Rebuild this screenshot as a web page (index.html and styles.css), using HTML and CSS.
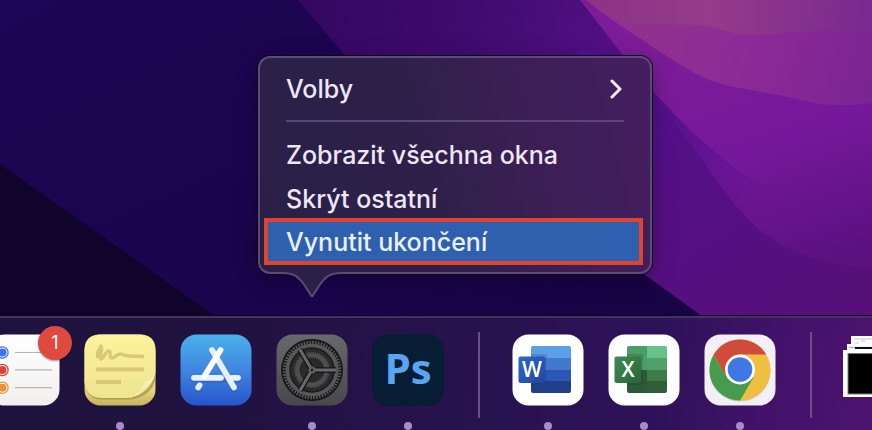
FILE: index.html
```
<!DOCTYPE html>
<html lang="cs">
<head>
<meta charset="UTF-8">
<meta name="viewport" content="width=device-width, initial-scale=1.0">
<title>Dock</title>
<link rel="stylesheet" href="styles.css">
</head>
<body>
<div class="desktop">
    <svg class="wallpaper" viewBox="0 0 872 430" preserveAspectRatio="xMidYMin slice" aria-hidden="true">
        <defs>
            <linearGradient id="navy" x1="0" y1="0" x2="1" y2="1">
                <stop offset="0" stop-color="#1e0555"/>
                <stop offset="0.5" stop-color="#1a044c"/>
                <stop offset="1" stop-color="#16023c"/>
            </linearGradient>
            <linearGradient id="purple" gradientUnits="userSpaceOnUse" x1="310" y1="0" x2="620" y2="60">
                <stop offset="0" stop-color="#340861"/>
                <stop offset="0.5" stop-color="#3f0b6f"/>
                <stop offset="1" stop-color="#541084"/>
            </linearGradient>
            <linearGradient id="purpleLow" gradientUnits="userSpaceOnUse" x1="640" y1="120" x2="780" y2="330">
                <stop offset="0" stop-color="#53108a"/>
                <stop offset="1" stop-color="#570f7a"/>
            </linearGradient>
            <linearGradient id="violet" gradientUnits="userSpaceOnUse" x1="720" y1="30" x2="800" y2="270">
                <stop offset="0" stop-color="#7c1c98"/>
                <stop offset="0.5" stop-color="#75189b"/>
                <stop offset="1" stop-color="#5b117f"/>
            </linearGradient>
            <linearGradient id="fold" gradientUnits="userSpaceOnUse" x1="660" y1="110" x2="770" y2="200">
                <stop offset="0" stop-color="#540f8c"/>
                <stop offset="1" stop-color="#540f8c" stop-opacity="0"/>
            </linearGradient>
            <linearGradient id="rose" gradientUnits="userSpaceOnUse" x1="660" y1="30" x2="872" y2="90">
                <stop offset="0" stop-color="#903190"/>
                <stop offset="0.4" stop-color="#8c2a96"/>
                <stop offset="1" stop-color="#7b2494"/>
            </linearGradient>
            <linearGradient id="pink" gradientUnits="userSpaceOnUse" x1="600" y1="0" x2="872" y2="20">
                <stop offset="0" stop-color="#8e3488"/>
                <stop offset="0.4" stop-color="#953b8a"/>
                <stop offset="1" stop-color="#792990"/>
            </linearGradient>
        </defs>
        <rect width="872" height="430" fill="url(#navy)"/>
        <path d="M0 164L215 316V430H0Z" fill="#10042c"/>
        <path d="M298 0L345 55Q480 190 643 273L702 316V430H872V0Z" fill="url(#purple)"/>
        <path d="M578 50H872V316H702L643 273Z" fill="url(#purpleLow)"/>
        <path d="M580 0L622 54L653 91C682 130 706 166 728 196C755 231 782 250 820 260Q845 266 872 268V0Z" fill="url(#violet)"/>
        <path d="M653 91Q690 134 735 168L790 205L770 238Q748 222 728 196C706 166 682 130 653 91Z" fill="url(#fold)"/>
        <path d="M586 0Q604 14 624 28C680 64 700 82 740 88Q790 97 820 104Q845 107 872 103V0Z" fill="url(#rose)"/>
        <path d="M586 0Q602 13 618 22C650 26 700 23 711 27C735 34 742 36 770 34Q830 28 872 33V0Z" fill="url(#pink)"/>
    </svg>

    <nav class="dock" aria-label="Dock">
        <button class="app" type="button" aria-label="Připomínky">
            <svg viewBox="0 0 72 72">
                <defs>
                    <linearGradient id="paper" x1="0" y1="0" x2="0" y2="1">
                        <stop offset="0" stop-color="#fff"/>
                        <stop offset="1" stop-color="#f2f0ef"/>
                    </linearGradient>
                </defs>
                <rect x="0.5" y="0.5" width="71" height="71" rx="16" fill="url(#paper)"/>
                <path d="M27 18.5H64M27 35.8H64M27 53.7H64" stroke="#b5b4b6" stroke-width="1.2"/>
                <g fill="#fff" stroke-width="1.3">
                    <circle cx="14.5" cy="18.5" r="5.6" stroke="#3a76e8"/>
                    <circle cx="14.5" cy="36" r="5.6" stroke="#d9453a"/>
                    <circle cx="14.5" cy="53.7" r="5.6" stroke="#e8953a"/>
                </g>
                <circle cx="14.5" cy="18.5" r="4" fill="#3a76e8"/>
                <circle cx="14.5" cy="36" r="4" fill="#d9453a"/>
                <circle cx="14.5" cy="53.7" r="4" fill="#e8953a"/>
            </svg>
            <span class="badge">1</span>
        </button>

        <button class="app running" type="button" aria-label="Lístečky">
            <svg viewBox="0 0 72 72">
                <defs>
                    <linearGradient id="noteBack" x1="0" y1="0" x2="0" y2="1">
                        <stop offset="0.8" stop-color="#e2d37c"/>
                        <stop offset="1" stop-color="#c6b35c"/>
                    </linearGradient>
                    <linearGradient id="noteFront" x1="0" y1="0" x2="0" y2="1">
                        <stop offset="0" stop-color="#fdf29c"/>
                        <stop offset="1" stop-color="#efe590"/>
                    </linearGradient>
                    <linearGradient id="noteCurl" gradientUnits="userSpaceOnUse" x1="54" y1="48" x2="63" y2="58">
                        <stop offset="0" stop-color="#f4ea98"/>
                        <stop offset="0.6" stop-color="#fbf3b4"/>
                        <stop offset="1" stop-color="#d8c978"/>
                    </linearGradient>
                </defs>
                <rect x="0.5" y="0.5" width="71" height="71" rx="16" fill="url(#noteBack)"/>
                <path d="M0.5 48Q2 65.5 18 65.5H46C60 64 69 57 71.5 44V38L50 50L0.5 46Z" fill="#a39244" opacity="0.75"/>
                <path d="M0.5 16.5Q0.5 0.5 16.5 0.5H55.5Q71.5 0.5 71.5 16.5V38C69 50 61 62 43 64H18Q2 64 0.5 48Z" fill="url(#noteFront)"/>
                <path d="M71.5 38C70 43 66 46 61 47C59 56 53 62 43 64C58 62 68 54 71.5 38Z" fill="url(#noteCurl)"/>
                <g fill="none" stroke="#d9c877" stroke-width="4">
                    <path d="M12 35.5H60M12 48H37"/>
                    <path d="M14 24C12 19 15 16 17 12C20 13 14 25 17 25C20 25 22 16 25 17C28 18 24 24 28 24C31 24 33 19 37 20C41 22 43 22 60 22.5" stroke-width="3.4"/>
                </g>
            </svg>
        </button>

        <button class="app" type="button" aria-label="App Store">
            <svg viewBox="0 0 72 72">
                <defs>
                    <linearGradient id="store" x1="0" y1="0" x2="0" y2="1">
                        <stop offset="0" stop-color="#4bb0ec"/>
                        <stop offset="0.5" stop-color="#3f86df"/>
                        <stop offset="1" stop-color="#2854cd"/>
                    </linearGradient>
                </defs>
                <rect x="0.5" y="0.5" width="71" height="71" rx="16" fill="url(#store)"/>
                <g fill="none" stroke-linecap="round" stroke-width="5.8">
                    <path d="M32 17.5L54 55M39 17.5L23.5 43.5M18.5 54.5L20 52M14 45.5H58" stroke="#1b4fae" opacity="0.35"/>
                    <path d="M32 16L54 53.5M18.2 53.5L19.6 51.2" stroke="#e4effb"/>
                    <path d="M14 43.8H41M52 43.8H58" stroke="#e9f2fc"/>
                    <path d="M40.5 16L24.5 42" stroke="#fff"/>
                </g>
            </svg>
        </button>

        <div class="app-slot">
            <button class="app running" type="button" aria-label="Předvolby systému" aria-haspopup="menu" aria-expanded="true">
                <svg viewBox="0 0 72 72">
                    <defs>
                        <linearGradient id="steel" x1="0" y1="0" x2="0" y2="1">
                            <stop offset="0" stop-color="#69696c"/>
                            <stop offset="1" stop-color="#48474a"/>
                        </linearGradient>
                    </defs>
                    <rect x="0.5" y="0.5" width="71" height="71" rx="16" fill="url(#steel)"/>
                    <circle cx="36" cy="36" r="31" fill="#171718"/>
                    <g fill="none">
                        <circle cx="36" cy="36" r="27.5" stroke="#5c5c5e" stroke-width="3.5" stroke-dasharray="1.5 1.38"/>
                        <circle cx="36" cy="36" r="24.5" stroke="#58585a" stroke-width="3.6"/>
                        <circle cx="36" cy="36" r="21.5" fill="#29292a"/>
                        <circle cx="36" cy="36" r="17" stroke="#5a5a5a" stroke-width="2" stroke-dasharray="1.1 1.125"/>
                        <circle cx="36" cy="36" r="14.5" stroke="#4e4e50" stroke-width="4"/>
                        <path d="M36 36H60M36 36L24 15.5M36 36L24 56.5" stroke="#151516" stroke-width="5.5"/>
                        <path d="M36 36H60M36 36L24 15.5M36 36L24 56.5" stroke="#69696b" stroke-width="3"/>
                    </g>
                    <circle cx="36" cy="36" r="3.5" fill="#5e5e60"/>
                    <circle cx="36" cy="36" r="1.2" fill="#171718"/>
                </svg>
            </button>

            <div class="menu" role="menu">
                <button class="menu-item" type="button" role="menuitem">
                    Volby
                    <svg class="chevron" viewBox="0 0 12 20" aria-hidden="true"><path d="M2 2L10 10L2 18"/></svg>
                </button>
                <hr class="menu-line">
                <button class="menu-item" type="button" role="menuitem">Zobrazit všechna okna</button>
                <button class="menu-item" type="button" role="menuitem">Skrýt ostatní</button>
                <button class="menu-item selected" type="button" role="menuitem">Vynutit ukončení</button>
                <svg class="menu-tail" viewBox="0 0 60 28" aria-hidden="true">
                    <path d="M0 0V1C13 1 16 5 21 11L28.5 22.5Q30 26 31.5 22.5L39 11C44 5 47 1 60 1V0Z" fill="#2b2047"/>
                    <path d="M0 1C13 1 16 5 21 11L28.500 22.500Q30 26 31.500 22.500L39 11C44 5 47 1 60 1" fill="none" stroke="#5b4c73" stroke-width="2"/>
                </svg>
            </div>
        </div>

        <button class="app running" type="button" aria-label="Photoshop">
            <span class="tile-ps">Ps</span>
        </button>

        <span class="divider"></span>

        <button class="app running" type="button" aria-label="Word">
            <svg viewBox="0 0 72 72">
                <defs>
                    <linearGradient id="wordTile" x1="0" y1="0" x2="1" y2="1">
                        <stop offset="0" stop-color="#2d67c9"/>
                        <stop offset="1" stop-color="#2147a0"/>
                    </linearGradient>
                    <clipPath id="sheet"><rect x="19" y="12" width="40" height="47" rx="2"/></clipPath>
                </defs>
                <rect x="0.5" y="0.5" width="71" height="71" rx="16" fill="#fff"/>
                <g clip-path="url(#sheet)">
                    <rect x="19" y="12" width="40" height="12" fill="#5b9fe8"/>
                    <rect x="19" y="24" width="40" height="12" fill="#4379cd"/>
                    <rect x="19" y="36" width="40" height="11" fill="#2b58b6"/>
                    <rect x="19" y="47" width="40" height="12" fill="#214088"/>
                    <path d="M19 20H35V51H19Z" fill="#14327a" opacity="0.2"/>
                </g>
                <rect x="6.5" y="22.5" width="26.5" height="26.5" rx="2" fill="url(#wordTile)"/>
                <text class="letter" x="20" y="43">W</text>
            </svg>
        </button>

        <button class="app running" type="button" aria-label="Excel">
            <svg viewBox="0 0 72 72">
                <defs>
                    <linearGradient id="excelTile" x1="0" y1="0" x2="1" y2="1">
                        <stop offset="0" stop-color="#3f8c50"/>
                        <stop offset="1" stop-color="#28653a"/>
                    </linearGradient>
                </defs>
                <rect x="0.5" y="0.5" width="71" height="71" rx="16" fill="#fff"/>
                <g clip-path="url(#sheet)">
                    <rect x="19" y="12" width="20" height="24" fill="#4c9e68"/>
                    <rect x="39" y="12" width="20" height="12" fill="#66c18a"/>
                    <rect x="39" y="24" width="20" height="12" fill="#4fa06b"/>
                    <rect x="19" y="36" width="20" height="23" fill="#2c5a38"/>
                    <rect x="39" y="36" width="20" height="11" fill="#3b7c48"/>
                    <rect x="39" y="47" width="20" height="12" fill="#2e5f39"/>
                    <path d="M19 20H35V51H19Z" fill="#103b20" opacity="0.2"/>
                </g>
                <rect x="6.5" y="22.5" width="26.5" height="26.5" rx="2" fill="url(#excelTile)"/>
                <text class="letter" x="20" y="43">X</text>
            </svg>
        </button>

        <button class="app running" type="button" aria-label="Chrome">
            <svg viewBox="0 0 72 72">
                <rect x="0.5" y="0.5" width="71" height="71" rx="16" fill="#f3eff6"/>
                <circle cx="36" cy="37" r="30.5" fill="#a79d9d" opacity="0.5"/>
                <circle cx="36" cy="36" r="30.5" fill="#f0bf42"/>
                <path d="M36 20.5H62.3A30.5 30.5 0 0 0 9.6 20.7L22.6 43.7Z" fill="#d04b3a"/>
                <path d="M9.6 20.7A30.5 30.5 0 0 0 36 66.5L49.4 43.7H36L22.6 43.7Z" fill="#469b4e"/>
                <circle cx="36" cy="35.5" r="15" fill="#fff"/>
                <circle cx="36" cy="35.5" r="12.3" fill="#3f78e4"/>
            </svg>
        </button>

        <span class="divider"></span>

        <button class="app" type="button" aria-label="Stažené">
            <svg viewBox="0 0 72 72">
                <rect x="7" y="2" width="60" height="40" fill="#fff"/>
                <path d="M10 5H66M11 9H15M17 7H21" stroke="#c9c3cf"/>
                <rect x="3" y="10" width="66" height="40" fill="#fff"/>
                <path d="M5 13.5H66" stroke="#b8b2bd" stroke-width="1.5"/>
                <path d="M11 14H66" stroke="#111" stroke-width="2"/>
                <rect x="-1" y="16" width="74" height="47" fill="#fff"/>
                <rect x="4" y="19.5" width="64" height="40.5" fill="#000" stroke="#77747a"/>
            </svg>
        </button>
    </nav>
</div>
</body>
</html>
```
FILE: styles.css
```
* {
    box-sizing: border-box;
}

body {
    margin: 0;
    font-family: Inter, "Noto Sans", sans-serif;
    background-color: #1a044c;
}

button {
    margin: 0;
    padding: 0;
    border: none;
    background: none;
    font-family: inherit;
    color: inherit;
}

.desktop {
    position: relative;
    display: flex;
    flex-direction: column;
    justify-content: flex-end;
    min-height: 100vh;
    overflow: hidden;
}

.wallpaper {
    position: absolute;
    inset: 0;
    width: 100%;
    height: 100%;
}

/* dock */
.dock {
    position: relative;
    display: flex;
    gap: 24px;
    padding-top: 16px;
    border-top: 2px solid #44335f;
    background: linear-gradient(100deg, #1e133f 0%, #21123f 25%, #28124f 55%, #2e1259 75%, #42126b 88%, #4d136e 100%);
    box-shadow: 0 -1px 0 #0b0220;
}

.dock > :first-child {
    margin-left: -12px;
}

.app-slot {
    position: relative;
    flex: none;
}

.app {
    position: relative;
    flex: none;
    display: flex;
    flex-direction: column;
    align-items: center;
    gap: 16px;
    width: 72px;
    height: 96px;
}

.app svg {
    display: block;
    width: 72px;
    height: 72px;
    overflow: visible;
}

.running::after {
    content: "";
    width: 8px;
    height: 8px;
    border-radius: 50%;
    background-color: #a58cc8;
}

.badge {
    position: absolute;
    top: -8px;
    right: -12px;
    width: 34px;
    height: 34px;
    border-radius: 50%;
    background-color: #de4a40;
    box-shadow: 0 1px 2px rgba(0, 0, 0, 0.4);
    color: #fff;
    font-size: 18px;
    line-height: 34px;
    text-align: center;
}

.tile-ps {
    width: 72px;
    height: 72px;
    border-radius: 16px;
    background-color: #071d33;
    color: #5aa5f3;
    font-family: "Open Sans", "Noto Sans", sans-serif;
    font-size: 42px;
    font-weight: 700;
    line-height: 68px;
    text-align: center;
}

.letter {
    fill: #fff;
    font-family: "Open Sans", "Noto Sans", sans-serif;
    font-size: 21px;
    font-weight: 600;
    text-anchor: middle;
}

.divider {
    flex: none;
    width: 2px;
    margin: -2px 8px 12px 10px;
    background-color: #6b4f8c;
}

/* context menu */
.menu {
    position: absolute;
    left: -18px;
    bottom: calc(100% + 60px);
    width: 394px;
    padding: 9px 0 7px;
    border: 2px solid #5b4c73;
    border-radius: 12px;
    background: linear-gradient(75deg, #2a2047 0%, #2c2048 40%, #3a1f53 65%, #461e61 100%);
    box-shadow: 0 0 0 1px #0e0324, 0 6px 24px rgba(0, 0, 0, 0.3);
    color: #efe6f7;
}

.menu-item {
    display: flex;
    align-items: center;
    justify-content: space-between;
    width: 100%;
    height: 44px;
    padding: 0 28px 0 26px;
    font-size: 25px;
    font-weight: 500;
    line-height: 32px;
    text-align: left;
    white-space: nowrap;
}

.chevron {
    width: 12px;
    height: 20px;
    fill: none;
    stroke: #f7eefc;
    stroke-width: 3;
    stroke-linecap: round;
    stroke-linejoin: round;
}

.menu-line {
    height: 2px;
    margin: 9px 26px 11px;
    border: none;
    background-color: #5c4678;
}

.selected {
    width: auto;
    min-width: calc(100% - 11px);
    height: 47px;
    margin: -3px 7px 0 4px;
    padding: 0 18px;
    border: 4px solid #df442f;
    background-color: #2f60b0;
    color: #e9f1fc;
}

/* starts on the menu's bottom border and covers it */
.menu-tail {
    position: absolute;
    top: 100%;
    left: 22px;
    width: 60px;
    height: 28px;
}
```
